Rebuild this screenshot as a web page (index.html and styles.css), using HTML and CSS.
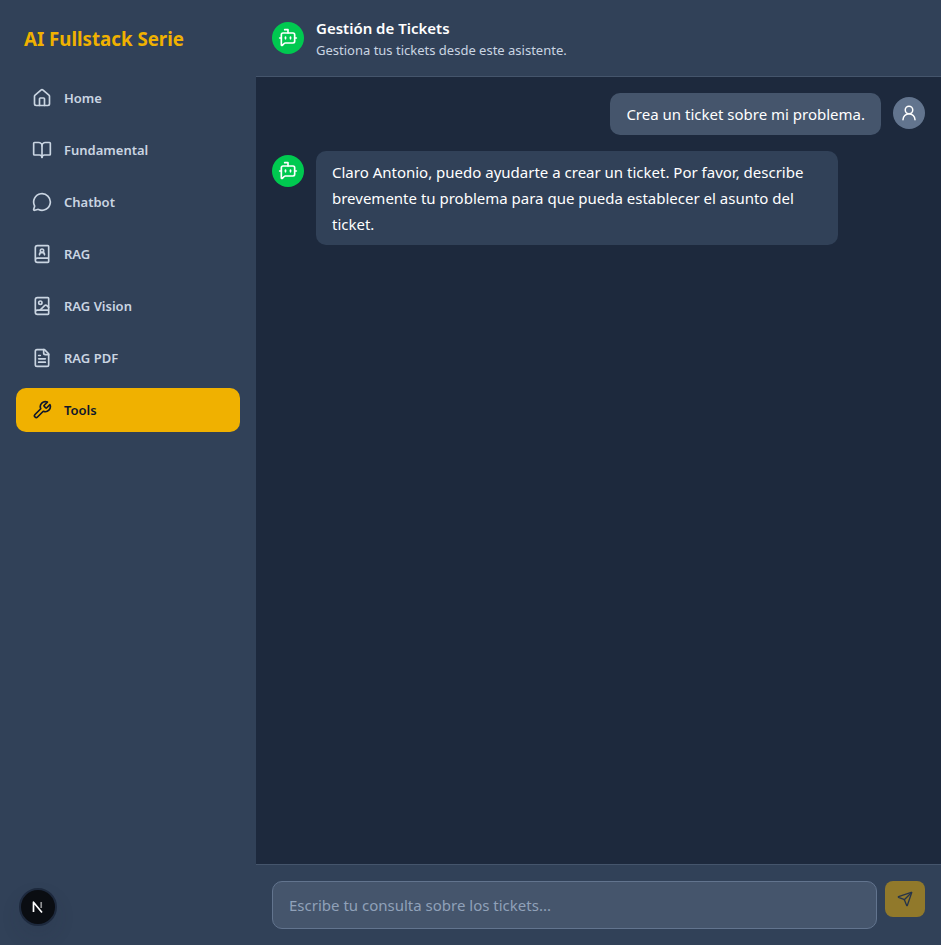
FILE: index.html
```html
<!DOCTYPE html>
<html lang="es">
<head>
<meta charset="utf-8">
<title>Gestión de Tickets</title>
<link rel="stylesheet" href="styles.css">
</head>
<body>
<div class="app">
  <aside class="sidebar">
    <h1 class="brand">AI Fullstack Serie</h1>
    <nav class="nav">
      <a class="nav-item"><svg class="icon" viewBox="0 0 24 24"><path d="M15 21v-8a1 1 0 0 0-1-1h-4a1 1 0 0 0-1 1v8"/><path d="M3 10a2 2 0 0 1 .709-1.528l7-5.999a2 2 0 0 1 2.582 0l7 5.999A2 2 0 0 1 21 10v9a2 2 0 0 1-2 2H5a2 2 0 0 1-2-2z"/></svg><span>Home</span></a>
      <a class="nav-item"><svg class="icon" viewBox="0 0 24 24"><path d="M12 7v14"/><path d="M3 18a1 1 0 0 1-1-1V4a1 1 0 0 1 1-1h5a4 4 0 0 1 4 4 4 4 0 0 1 4-4h5a1 1 0 0 1 1 1v13a1 1 0 0 1-1 1h-6a3 3 0 0 0-3 3 3 3 0 0 0-3-3z"/></svg><span>Fundamental</span></a>
      <a class="nav-item"><svg class="icon" viewBox="0 0 24 24"><path d="M2.992 16.342a2 2 0 0 1 .094 1.167l-1.065 3.29a1 1 0 0 0 1.236 1.168l3.413-.998a2 2 0 0 1 1.099.092 10 10 0 1 0-4.777-4.719"/></svg><span>Chatbot</span></a>
      <a class="nav-item"><svg class="icon" viewBox="0 0 24 24"><path d="M15 13a3 3 0 1 0-6 0"/><path d="M4 19.5v-15A2.5 2.5 0 0 1 6.5 2H19a1 1 0 0 1 1 1v18a1 1 0 0 1-1 1H6.5a1 1 0 0 1 0-5H20"/><circle cx="12" cy="8" r="2"/></svg><span>RAG</span></a>
      <a class="nav-item"><svg class="icon" viewBox="0 0 24 24"><path d="m20 13.7-2.1-2.1a2 2 0 0 0-2.8 0L9.7 17"/><path d="M4 19.5v-15A2.5 2.5 0 0 1 6.5 2H19a1 1 0 0 1 1 1v18a1 1 0 0 1-1 1H6.5a1 1 0 0 1 0-5H20"/><circle cx="10" cy="8" r="2"/></svg><span>RAG Vision</span></a>
      <a class="nav-item"><svg class="icon" viewBox="0 0 24 24"><path d="M15 2H6a2 2 0 0 0-2 2v16a2 2 0 0 0 2 2h12a2 2 0 0 0 2-2V7Z"/><path d="M14 2v4a2 2 0 0 0 2 2h4"/><path d="M10 9H8"/><path d="M16 13H8"/><path d="M16 17H8"/></svg><span>RAG PDF</span></a>
      <a class="nav-item active"><svg class="icon" viewBox="0 0 24 24"><path d="M14.7 6.3a1 1 0 0 0 0 1.4l1.6 1.6a1 1 0 0 0 1.4 0l3.77-3.77a6 6 0 0 1-7.94 7.94l-6.91 6.91a2.12 2.12 0 0 1-3-3l6.91-6.91a6 6 0 0 1 7.94-7.94l-3.76 3.76z"/></svg><span>Tools</span></a>
    </nav>
    <div class="next-badge"><svg class="next-logo" viewBox="0 0 14 14"><path d="M2.5 12V2.2L11 12.5"/><path class="next-tail" d="M10.2 2v6"/></svg></div>
  </aside>
  <main class="main">
    <header class="header">
      <div class="avatar bot"><svg class="icon-bot" viewBox="0 0 24 24"><path d="M12 6V2H8"/><path d="M15 11v2"/><path d="M2 12h2"/><path d="M20 12h2"/><path d="M20 16a2 2 0 0 1-2 2H8.828a2 2 0 0 0-1.414.586l-2.202 2.202A.71.71 0 0 1 4 20.286V8a2 2 0 0 1 2-2h12a2 2 0 0 1 2 2z"/><path d="M9 11v2"/></svg></div>
      <div class="header-text">
        <h2 class="title">Gestión de Tickets</h2>
        <p class="subtitle">Gestiona tus tickets desde este asistente.</p>
      </div>
    </header>
    <section class="messages">
      <div class="msg user">
        <div class="bubble user-bubble">Crea un ticket sobre mi problema.</div>
        <div class="avatar person"><svg class="icon-user" viewBox="0 0 24 24"><circle cx="12" cy="8" r="5"/><path d="M20 21a8 8 0 0 0-16 0"/></svg></div>
      </div>
      <div class="msg">
        <div class="avatar bot offset"><svg class="icon-bot" viewBox="0 0 24 24"><path d="M12 6V2H8"/><path d="M15 11v2"/><path d="M2 12h2"/><path d="M20 12h2"/><path d="M20 16a2 2 0 0 1-2 2H8.828a2 2 0 0 0-1.414.586l-2.202 2.202A.71.71 0 0 1 4 20.286V8a2 2 0 0 1 2-2h12a2 2 0 0 1 2 2z"/><path d="M9 11v2"/></svg></div>
        <div class="bubble bot-bubble">Claro Antonio, puedo ayudarte a crear un ticket. Por favor, describe brevemente tu problema para que pueda establecer el asunto del ticket.</div>
      </div>
    </section>
    <footer class="composer">
      <div class="input">Escribe tu consulta sobre los tickets...</div>
      <button class="send"><svg class="icon-send" viewBox="0 0 24 24"><path d="M14.536 21.686a.5.5 0 0 0 .937-.024l6.5-19a.496.496 0 0 0-.635-.635l-19 6.5a.5.5 0 0 0-.024.937l7.93 3.18a2 2 0 0 1 1.112 1.11z"/><path d="m21.854 2.147-10.94 10.939"/></svg></button>
    </footer>
  </main>
</div>
</body>
</html>
```
FILE: styles.css
```css
* { box-sizing: border-box; }
html, body { margin: 0; height: 100%; }
body { font-family: "Noto Sans", "Open Sans", sans-serif; color: #fff; background: #1d293d; overflow: hidden; }
svg { fill: none; stroke: currentColor; stroke-width: 2; stroke-linecap: round; stroke-linejoin: round; display: block; }
.app { display: flex; height: 945px; }
.sidebar { width: 256px; flex: none; background: #314158; padding: 25px 16px 24px; display: flex; flex-direction: column; position: relative; }
.brand { margin: 0 0 23px 8px; font-size: 18.7px; line-height: 28px; font-weight: 700; color: #f0b100; white-space: nowrap; }
.nav { display: flex; flex-direction: column; gap: 8px; }
.nav-item { display: flex; align-items: center; gap: 12px; height: 44px; padding: 0 16px; border-radius: 10px; font-size: 13px; font-weight: 600; color: #cad5e2; }
.nav-item.active { background: #f0b100; color: #0f172b; }
.icon { width: 20px; height: 20px; flex: none; }
.next-badge { position: absolute; left: 19px; top: 888px; width: 38px; height: 38px; border-radius: 50%; background: #0a0d12; border: 2px solid #1d293d; display: flex; align-items: center; justify-content: center; box-shadow: 0 10px 20px rgba(29,41,61,.12); }
.next-logo { width: 14px; height: 14px; stroke-width: 1.7; stroke-linecap: butt; color: #fff; }
.next-tail { opacity: .55; }
.main { flex: 1; min-width: 0; display: flex; flex-direction: column; }
.header { height: 77px; flex: none; background: #314158; border-bottom: 1px solid #45556c; padding: 0 16px; display: flex; align-items: center; gap: 12px; }
.avatar { width: 32px; height: 32px; border-radius: 50%; flex: none; display: flex; align-items: center; justify-content: center; color: #fff; }
.avatar.bot { background: #00c950; }
.avatar.offset { margin-top: 4px; }
.avatar.person { background: #62748e; margin-top: 4px; }
.icon-bot { width: 20px; height: 20px; }
.icon-user { width: 18px; height: 18px; }
.title { margin: 0; font-size: 15px; line-height: 24px; font-weight: 600; color: #fff; }
.subtitle { margin: 0; font-size: 13px; line-height: 20px; color: #cad5e2; }
.messages { flex: 1; padding: 16px; display: flex; flex-direction: column; gap: 16px; }
.msg { display: flex; gap: 12px; align-items: flex-start; }
.msg.user { justify-content: flex-end; }
.bubble { padding: 8px 16px; border-radius: 10px; font-size: 15px; line-height: 26px; color: #fff; }
.user-bubble { background: #45556c; }
.bot-bubble { background: #314158; width: 522px; }
.composer { height: 81px; flex: none; background: #314158; border-top: 1px solid #45556c; padding: 16px; display: flex; gap: 8px; align-items: flex-start; }
.input { flex: 1; height: 48px; border-radius: 10px; background: #45556c; border: 1px solid #62748e; padding: 0 16px; display: flex; align-items: center; font-size: 15px; color: #90a1b9; }
.send { width: 40px; height: 36px; border: 0; border-radius: 8px; background: #f0b100; color: #1d293d; opacity: .5; display: flex; align-items: center; justify-content: center; padding: 0; }
.icon-send { width: 16px; height: 16px; }
```
